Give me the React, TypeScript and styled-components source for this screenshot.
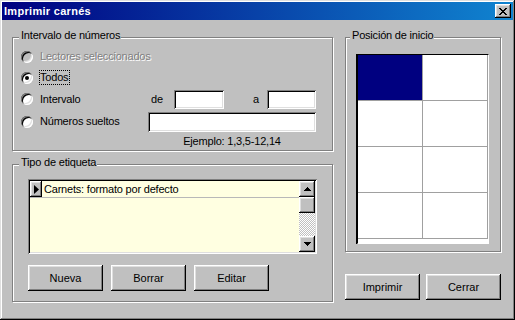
import React from "react";
import styled, { createGlobalStyle } from "styled-components";

const GlobalStyle = createGlobalStyle`
  * { box-sizing: border-box; }
  html, body { margin: 0; padding: 0; background: #c0c0c0; }
  body {
    font-family: "Liberation Sans", Arial, sans-serif;
    font-size: 11px;
    letter-spacing: -0.2px;
    color: #000;
  }
`;

const raised = `
  background: #c0c0c0;
  box-shadow: inset -1px -1px #000, inset 1px 1px #fff, inset -2px -2px #808080, inset 2px 2px #dfdfdf;
`;
const sunken = `
  box-shadow: inset 1px 1px #808080, inset -1px -1px #fff, inset 2px 2px #000, inset -2px -2px #dfdfdf;
`;

const Window = styled.div`
  width: 515px;
  height: 320px;
  padding: 2px;
  display: flex;
  flex-direction: column;
  background: #c0c0c0;
  box-shadow: inset -1px -1px #000, inset 1px 1px #dfdfdf, inset -2px -2px #808080, inset 2px 2px #fff;
`;

const TitleBar = styled.div`
  height: 18px;
  flex: none;
  display: flex;
  align-items: center;
  justify-content: space-between;
  padding: 0 2px 0 2px;
  background: linear-gradient(90deg, #000080, #1084d0);
  color: #fff;
  font-weight: bold;
  letter-spacing: 0.3px;
`;

const CloseButton = styled.div`
  width: 16px;
  height: 14px;
  ${raised}
  display: flex;
  align-items: center;
  justify-content: center;
  padding-right: 1px;
`;

const Body = styled.div`
  flex: 1;
  display: flex;
  gap: 12px;
  padding: 17px 12px 0 10px;
`;

const LeftColumn = styled.div`
  width: 321px;
  flex: none;
  display: flex;
  flex-direction: column;
  gap: 13px;
`;

const RightColumn = styled.div`
  width: 156px;
  flex: none;
  display: flex;
  flex-direction: column;
  gap: 22px;
`;

const GroupBox = styled.div<{ $h: number; $pt: number; $pl: number }>`
  position: relative;
  height: ${(p) => p.$h}px;
  flex: none;
  border: 1px solid #808080;
  box-shadow: inset 1px 1px #fff, 1px 1px #fff;
  padding: ${(p) => p.$pt}px 0 0 ${(p) => p.$pl}px;
`;

const Legend = styled.span<{ $left: number }>`
  position: absolute;
  top: -9px;
  left: ${(p) => p.$left}px;
  padding: 0 1px 0 2px;
  line-height: 13px;
  white-space: nowrap;
  background: #c0c0c0;
`;

const OptionRow = styled.div<{ $h: number }>`
  height: ${(p) => p.$h}px;
  display: flex;
  align-items: center;
`;

const OptionCell = styled.label`
  width: 127px;
  flex: none;
  display: flex;
  align-items: center;
  gap: 6px;
  white-space: nowrap;
`;

const RadioCircle = styled.span<{ $checked?: boolean; $disabled?: boolean }>`
  width: 12px;
  height: 12px;
  flex: none;
  border-radius: 50%;
  background: ${(p) => (p.$disabled ? "#c0c0c0" : "#fff")};
  box-shadow: inset 1px 1px #808080, inset -1px -1px #fff, inset 2px 2px #000, inset -2px -2px #dfdfdf;
  display: flex;
  align-items: center;
  justify-content: center;
  &::after {
    content: "";
    width: 4px;
    height: 4px;
    border-radius: 50%;
    background: #000;
    display: ${(p) => (p.$checked ? "block" : "none")};
  }
`;

const OptionText = styled.span<{ $disabled?: boolean; $focused?: boolean }>`
  flex: none;
  white-space: nowrap;
  line-height: 13px;
  padding: 0 1px 0 0;
  border: 1px dotted ${(p) => (p.$focused ? "#000" : "transparent")};
  color: ${(p) => (p.$disabled ? "#808080" : "#000")};
  text-shadow: ${(p) => (p.$disabled ? "1px 1px 0 #fff" : "none")};
`;

const FieldLabel = styled.span<{ $w: number; $pl: number }>`
  width: ${(p) => p.$w}px;
  padding-left: ${(p) => p.$pl}px;
  flex: none;
`;

const TextField = styled.input<{ $w: number; $h: number }>`
  width: ${(p) => p.$w}px;
  height: ${(p) => p.$h}px;
  flex: none;
  border: none;
  outline: none;
  background: #fff;
  font: inherit;
  padding: 0 3px;
  ${sunken}
`;

const Hint = styled.div`
  margin: 2px 0 0 127px;
  width: 168px;
  text-align: center;
  line-height: 13px;
  white-space: nowrap;
`;

const ListBox = styled.div`
  width: 289px;
  height: 75px;
  padding: 2px;
  display: flex;
  background: #ffffe1;
  ${sunken}
`;

const ListRows = styled.div`
  flex: 1;
  display: flex;
  flex-direction: column;
`;

const ListRow = styled.div`
  height: 17px;
  display: flex;
  align-items: stretch;
  border-bottom: 1px solid #b8b8b8;
`;

const RowHeader = styled.div`
  width: 12px;
  flex: none;
  ${raised}
  display: flex;
  align-items: center;
  justify-content: center;
`;

const RowText = styled.div`
  padding-left: 2px;
  line-height: 16px;
  white-space: nowrap;
`;

const ScrollBar = styled.div`
  width: 16px;
  flex: none;
  display: flex;
  flex-direction: column;
`;

const ScrollButton = styled.div`
  height: 16px;
  flex: none;
  ${raised}
  display: flex;
  align-items: center;
  justify-content: center;
`;

const ScrollTrack = styled.div`
  flex: 1;
  background: repeating-conic-gradient(#c0c0c0 0 25%, #fff 0 50%) 0 0 / 2px 2px;
`;

const ButtonRow = styled.div<{ $gap: number; $mt?: number }>`
  display: flex;
  gap: ${(p) => p.$gap}px;
  margin-top: ${(p) => p.$mt ?? 0}px;
`;

const PushButton = styled.button<{ $w: number }>`
  width: ${(p) => p.$w}px;
  height: 26px;
  border: none;
  padding: 0;
  font: inherit;
  color: #000;
  ${raised}
`;

const Sheet = styled.div`
  width: 132px;
  height: 190px;
  border: 1px solid;
  border-color: #000 #fff #fff #000;
  box-shadow: -1px 0 0 #000;
  background: #fff;
  padding: 0 1px 4px 0;
  display: grid;
  grid-template-columns: repeat(2, 64px);
  grid-template-rows: repeat(4, 45px);
  gap: 1px;
`;

const LabelCell = styled.div<{ $selected?: boolean }>`
  background: ${(p) => (p.$selected ? "#000080" : "#fff")};
  box-shadow: 1px 0 0 #a0a0a0, 0 1px 0 #a0a0a0, 1px 1px 0 #a0a0a0;
`;

const CloseGlyph = () => (
  <svg width="8" height="7" viewBox="0 0 8 7" shapeRendering="crispEdges">
    <path
      fill="#000"
      d="M0 0h2v1H0zM6 0h2v1H6zM1 1h2v1H1zM5 1h2v1H5zM2 2h4v1H2zM3 3h2v1H3zM2 4h4v1H2zM1 5h2v1H1zM5 5h2v1H5zM0 6h2v1H0zM6 6h2v1H6z"
    />
  </svg>
);

const ArrowUp = () => (
  <svg width="7" height="4" viewBox="0 0 7 4" shapeRendering="crispEdges">
    <path fill="#000" d="M3 0h1v1h1v1h1v1h1v1H0V3h1V2h1V1h1z" />
  </svg>
);

const ArrowDown = () => (
  <svg width="7" height="4" viewBox="0 0 7 4" shapeRendering="crispEdges">
    <path fill="#000" d="M0 0h7v1H6v1H5v1H4v1H3V3H2V2H1V1H0z" />
  </svg>
);

const RowPointer = () => (
  <svg width="5" height="9" viewBox="0 0 5 9">
    <path fill="#000" d="M0 0L5 4.5L0 9z" />
  </svg>
);

const options = [
  { label: "Lectores seleccionados", disabled: true },
  { label: "Todos", checked: true, focused: true },
];

export default function App() {
  return (
    <>
      <GlobalStyle />
      <Window>
        <TitleBar>
          <span>Imprimir carnés</span>
          <CloseButton>
            <CloseGlyph />
          </CloseButton>
        </TitleBar>
        <Body>
          <LeftColumn>
            <GroupBox $h={114} $pt={8} $pl={8}>
              <Legend $left={6}>Intervalo de números</Legend>
              {options.map((o) => (
                <OptionRow $h={21} key={o.label}>
                  <OptionCell>
                    <RadioCircle $checked={o.checked} $disabled={o.disabled} />
                    <OptionText $disabled={o.disabled} $focused={o.focused}>
                      {o.label}
                    </OptionText>
                  </OptionCell>
                </OptionRow>
              ))}
              <OptionRow $h={22}>
                <OptionCell>
                  <RadioCircle />
                  <OptionText>Intervalo</OptionText>
                </OptionCell>
                <FieldLabel $w={26} $pl={3}>de</FieldLabel>
                <TextField $w={50} $h={19} defaultValue="" />
                <FieldLabel $w={43} $pl={29}>a</FieldLabel>
                <TextField $w={49} $h={19} defaultValue="" />
              </OptionRow>
              <OptionRow $h={23}>
                <OptionCell>
                  <RadioCircle />
                  <OptionText>Números sueltos</OptionText>
                </OptionCell>
                <TextField $w={168} $h={20} defaultValue="" />
              </OptionRow>
              <Hint>Ejemplo: 1,3,5-12,14</Hint>
            </GroupBox>
            <GroupBox $h={138} $pt={14} $pl={15}>
              <Legend $left={6}>Tipo de etiqueta</Legend>
              <ListBox>
                <ListRows>
                  <ListRow>
                    <RowHeader>
                      <RowPointer />
                    </RowHeader>
                    <RowText>Carnets: formato por defecto</RowText>
                  </ListRow>
                </ListRows>
                <ScrollBar>
                  <ScrollButton>
                    <ArrowUp />
                  </ScrollButton>
                  <ScrollButton />
                  <ScrollTrack />
                  <ScrollButton>
                    <ArrowDown />
                  </ScrollButton>
                </ScrollBar>
              </ListBox>
              <ButtonRow $gap={8} $mt={11}>
                <PushButton $w={75}>Nueva</PushButton>
                <PushButton $w={75}>Borrar</PushButton>
                <PushButton $w={75}>Editar</PushButton>
              </ButtonRow>
            </GroupBox>
          </LeftColumn>
          <RightColumn>
            <GroupBox $h={215} $pt={16} $pl={11}>
              <Legend $left={4}>Posición de inicio</Legend>
              <Sheet>
                {Array.from({ length: 8 }).map((_, i) => (
                  <LabelCell key={i} $selected={i === 0} />
                ))}
              </Sheet>
            </GroupBox>
            <ButtonRow $gap={6}>
              <PushButton $w={75}>Imprimir</PushButton>
              <PushButton $w={75}>Cerrar</PushButton>
            </ButtonRow>
          </RightColumn>
        </Body>
      </Window>
    </>
  );
}
